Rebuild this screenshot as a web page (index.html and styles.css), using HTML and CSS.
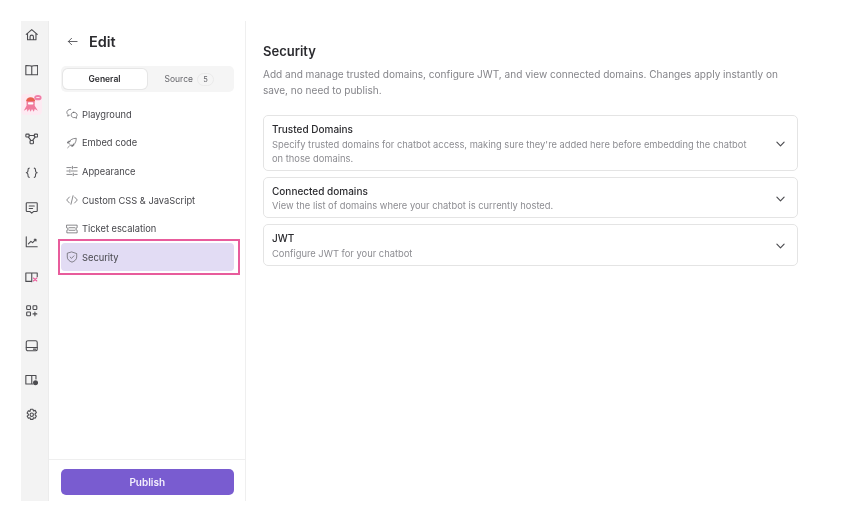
FILE: index.html
```html
<!DOCTYPE html>
<html lang="en">
<head>
    <meta charset="UTF-8">
    <meta name="viewport" content="width=device-width, initial-scale=1.0">
    <title>Security</title>
    <link rel="stylesheet" href="styles.css">
</head>
<body>
    <div class="app">
        <nav class="rail">
            <div class="rail-icon"><svg viewBox="0 0 16 16"><path d="M1.500 7.500 8 2l6.500 5.500M3 6.500V14h10V6.500M6 14v-3.500a2 2 0 0 1 4 0V14"/></svg></div>
            <div class="rail-icon"><svg viewBox="0 0 16 16"><path d="M8 4v10M8 4C7 3 5 3 1 3v11h14V3C11 3 9 3 8 4"/></svg></div>
            <div class="rail-icon rail-active">
                <svg viewBox="0 0 22 22" class="mascot">
                    <path class="fill-pink" d="M5 9a4.500 4.500 0 0 1 9 0v4l3.500 5.500-3.500-2-1 3-2-3-1.500 3-1.500-3-2 3-.5-3-3.500 2L5 13z"/>
                    <path class="fill-red" d="M4.500 8a5 4.500 0 0 1 10 0z"/>
                    <rect class="fill-white" x="6.500" y="9" width="6" height="2.500" rx="1"/>
                    <ellipse class="fill-bubble" cx="17.500" cy="4" rx="4" ry="3"/>
                    <rect class="fill-white" x="15.500" y="3.500" width="4" height="1" rx=".5"/>
                </svg>
            </div>
            <div class="rail-icon"><svg viewBox="0 0 16 16"><rect x="1" y="2.500" width="4" height="3.500" rx="1"/><rect x="11" y="2.500" width="4" height="3.500" rx="1"/><rect x="6" y="10" width="4" height="4" rx="1"/><path d="M5 4.200h6M4 6l3 4M12 6l-3 4"/></svg></div>
            <div class="rail-icon"><svg viewBox="0 0 16 16"><path d="M5 2.500C3 2.800 3.500 5 3.500 6S3 7.800 1.500 8c1.500.2 2 1 2 2s-.5 3.200 1.500 3.500M11 2.500c2 .3 1.500 2.500 1.500 3.500s.5 1.800 2 2c-1.500.2-2 1-2 2s.5 3.200-1.500 3.500"/></svg></div>
            <div class="rail-icon"><svg viewBox="0 0 16 16"><path d="M2.500 2h11a1 1 0 0 1 1 1v8.500a1 1 0 0 1-1 1H10L8 14.500 6 12.500H2.500a1 1 0 0 1-1-1V3a1 1 0 0 1 1-1zM5 6h6M5 8.800h4"/></svg></div>
            <div class="rail-icon"><svg viewBox="0 0 16 16"><path d="M1.500 2v12h13M4 10.500l3-3 2 1.500 3.500-3.500M11 5h2v2"/></svg></div>
            <div class="rail-icon"><svg viewBox="0 0 16 16"><path d="M8 3.500V14M8 3.500H1v10h7M8 3.500h6.500V8"/><path class="stroke-pink" d="M10 13l4-3.500M10 9.500l4 3.500"/></svg></div>
            <div class="rail-icon"><svg viewBox="0 0 16 16"><rect x="2" y="2" width="4.500" height="4.500" rx="1"/><rect x="9.500" y="2" width="4.500" height="4.500" rx="1"/><rect x="2" y="9.500" width="4.500" height="4.500" rx="1"/><path d="M11.750 9.500v4.500M9.500 11.750H14"/></svg></div>
            <div class="rail-icon"><svg viewBox="0 0 16 16"><rect x="1.500" y="2" width="13" height="12" rx="2"/><path d="M1.500 10h13M10 12h2.500"/></svg></div>
            <div class="rail-icon"><svg viewBox="0 0 16 16"><path d="M8 3V13M9 13H1V3h12v4"/><circle class="fill-grey" cx="12.500" cy="11.500" r="3"/></svg></div>
            <div class="rail-icon"><svg viewBox="0 0 16 16"><path d="M6.500 1.500h3l.5 2 2-.7 1.500 2.600-1.500 1.400v1.400l1.500 1.400-1.500 2.600-2-.7-.5 2h-3l-.5-2-2 .7-1.500-2.600L4 8.700V7.300L2.500 5.900 4 3.300l2 .7z"/><circle cx="8" cy="8" r="2"/></svg></div>
        </nav>

        <aside class="sidebar">
            <div class="sidebar-body">
                <div class="edit-head">
                    <svg viewBox="0 0 12 12" class="back-icon"><path d="M11 6H1.500M5 2.500 1.500 6 5 9.500"/></svg>
                    <span>Edit</span>
                </div>
                <div class="tabs">
                    <div class="tab tab-active">General</div>
                    <div class="tab">Source <span class="badge">5</span></div>
                </div>
                <ul class="menu">
                    <li class="menu-item"><svg viewBox="0 0 14 14"><path d="M5.500 1.500C3 1.500 1 3 1 5c0 1 .5 2 1.300 2.600L2 9.500l2-1M9 5c2.200 0 4 1.300 4 3.200 0 .9-.4 1.600-1 2.200l.3 1.600-1.800-.9c-2.500.6-4.500-.9-4.500-2.900C6 6.400 7.300 5 9 5z"/></svg>Playground</li>
                    <li class="menu-item"><svg viewBox="0 0 14 14"><path d="M5 9l-2-2c1-3 4-5.500 9-5.500 0 5-2.500 8-5.500 9zM3 7H1.500l1-2H5M7 9v2l2-1V8M2 12.500l2-2"/></svg>Embed code</li>
                    <li class="menu-item"><svg viewBox="0 0 14 14"><path d="M1 3h5M9 3h4M1 7h2M6 7h7M1 11h6M10 11h3M7.500 1.500v3M4.500 5.500v3M8.500 9.500v3"/></svg>Appearance</li>
                    <li class="menu-item"><svg viewBox="0 0 14 14"><path d="M4 3.500.8 7 4 10.500M10 3.500 13.200 7 10 10.500M8.200 2 5.800 12"/></svg>Custom CSS &amp; JavaScript</li>
                    <li class="menu-item"><svg viewBox="0 0 14 14"><path d="M1 2.500h12v3a1.500 1.500 0 0 0 0 3v3H1v-3a1.500 1.500 0 0 0 0-3zM3.500 5.500h7M3.500 8.500h7"/></svg>Ticket escalation</li>
                    <li class="menu-item menu-active"><svg viewBox="0 0 14 14"><path d="M7 1.200 12.500 3v4c0 3-2.500 5-5.500 6-3-1-5.500-3-5.500-6V3zM4.800 7l1.600 1.600 2.900-3"/></svg>Security</li>
                </ul>
            </div>
            <div class="sidebar-foot">
                <button type="button" class="publish">Publish</button>
            </div>
        </aside>

        <main class="content">
            <h1>Security</h1>
            <p class="intro">Add and manage trusted domains, configure JWT, and view connected domains. Changes apply instantly on save, no need to publish.</p>
            <div class="card">
                <div class="card-text">
                    <h2>Trusted Domains</h2>
                    <p>Specify trusted domains for chatbot access, making sure they're added here before embedding the chatbot on those domains.</p>
                </div>
                <svg viewBox="0 0 10 6" class="chevron"><path d="M1 1l4 4 4-4"/></svg>
            </div>
            <div class="card">
                <div class="card-text">
                    <h2>Connected domains</h2>
                    <p>View the list of domains where your chatbot is currently hosted.</p>
                </div>
                <svg viewBox="0 0 10 6" class="chevron"><path d="M1 1l4 4 4-4"/></svg>
            </div>
            <div class="card">
                <div class="card-text">
                    <h2>JWT</h2>
                    <p>Configure JWT for your chatbot</p>
                </div>
                <svg viewBox="0 0 10 6" class="chevron"><path d="M1 1l4 4 4-4"/></svg>
            </div>
        </main>
    </div>
</body>
</html>
```

FILE: styles.css
```css
body {
    margin: 0;
    background-color: #fff;
    font-family: Inter, "Liberation Sans", sans-serif;
    color: #2b2b2f;
}
svg {
    fill: none;
    stroke: currentColor;
    stroke-linecap: round;
    stroke-linejoin: round;
}
.app {
    display: flex;
    width: 847px;
    height: 480px;
    margin: 21px 0 0 21px;
    filter: blur(0.5px);
}
.rail {
    width: 27px;
    flex-shrink: 0;
    display: flex;
    flex-direction: column;
    padding-top: 3.500px;
    background-color: #f3f3f3;
    border-right: 1px solid #ececec;
    color: #4c4c50;
}
.rail-icon {
    width: 21px;
    height: 21px;
    margin-bottom: 13.500px;
    display: flex;
    align-items: center;
    justify-content: center;
    flex-shrink: 0;
}
.rail-icon svg {
    width: 13.500px;
    height: 13.500px;
    stroke-width: 1.300;
}
.rail-active {
    border-radius: 4px;
    background-color: #fdeaf2;
}
.rail-icon .mascot {
    width: 20px;
    height: 20px;
    stroke: none;
}
.fill-pink { fill: #f07a9c; }
.fill-red { fill: #e8604f; }
.fill-white { fill: #fff; }
.fill-bubble { fill: #ef7fa8; }
.fill-grey { fill: #4c4c50; stroke: none; }
.stroke-pink { stroke: #ec5c9c; }

.sidebar {
    width: 196px;
    flex-shrink: 0;
    display: flex;
    flex-direction: column;
    border-right: 1px solid #efefef;
}
.sidebar-body {
    flex: 1;
    padding: 0 11px 0 11.500px;
}
.edit-head {
    height: 41px;
    margin-bottom: 4px;
    display: flex;
    align-items: center;
    padding-left: 6.500px;
    gap: 11px;
    font-size: 14.500px;
    font-weight: 600;
}
.back-icon {
    width: 11px;
    height: 11px;
    stroke-width: 1;
    color: #55555a;
}
.tabs {
    display: flex;
    height: 26px;
    box-sizing: border-box;
    padding: 3px 2px;
    border-radius: 5px;
    background-color: #f5f5f5;
}
.tab {
    flex: 1;
    display: flex;
    align-items: center;
    justify-content: center;
    gap: 4px;
    font-size: 8.500px;
    color: #66666b;
}
.tab-active {
    flex: 0 0 84px;
    border-radius: 5px;
    background-color: #fff;
    box-shadow: 0 0 0 1px #e6e6e6;
    font-weight: 600;
    color: #2b2b2f;
}
.badge {
    width: 17px;
    height: 13px;
    display: flex;
    align-items: center;
    justify-content: center;
    border: 1px solid #ebebeb;
    box-sizing: border-box;
    border-radius: 7px;
    font-size: 7.500px;
}
.menu {
    list-style: none;
    margin: 8px 0 0;
    padding: 0;
    display: flex;
    flex-direction: column;
    gap: 0.700px;
}
.menu-item {
    position: relative;
    height: 28px;
    display: flex;
    align-items: center;
    gap: 4px;
    padding-left: 5.500px;
    border-radius: 4px;
    font-size: 9.300px;
    color: #46464b;
}
.menu-item svg {
    width: 12px;
    height: 12px;
    stroke-width: 0.800;
    flex-shrink: 0;
    color: #55555a;
}
.menu-active {
    background-color: #e2dcf4;
}
.menu-active::after {
    content: "";
    position: absolute;
    top: -4px;
    bottom: -4px;
    left: -3px;
    right: -6px;
    border: 2px solid #e85c9c;
}
.sidebar-foot {
    height: 42px;
    box-sizing: border-box;
    padding: 9px 11px 0 11.500px;
    border-top: 1px solid #efefef;
}
.publish {
    width: 100%;
    height: 26px;
    border: none;
    border-radius: 5px;
    background-color: #795cd0;
    color: #f4f0fd;
    font-family: inherit;
    font-size: 10px;
    font-weight: 600;
}

.content {
    width: 535px;
    padding: 22px 0 0 17px;
}
h1 {
    margin: 0;
    font-size: 13px;
    line-height: 16px;
    font-weight: 600;
}
.intro {
    width: 525px;
    margin: 7px 0 17px;
    font-size: 10.050px;
    line-height: 16px;
    color: #85858a;
}
.card {
    display: flex;
    align-items: center;
    justify-content: space-between;
    margin-bottom: 6px;
    padding: 7px 12.500px 4px 8px;
    border: 1px solid #e4e4e4;
    border-radius: 5px;
}
.card-text {
    width: 482px;
}
h2 {
    margin: 0;
    font-size: 10px;
    line-height: 13.500px;
    font-weight: 500;
}
.card-text p {
    margin: 1px 0 0;
    font-size: 9.350px;
    line-height: 14px;
    color: #8c8c91;
}
.chevron {
    width: 9px;
    height: 6px;
    stroke-width: 1.300;
    color: #4c4c50;
}
```
